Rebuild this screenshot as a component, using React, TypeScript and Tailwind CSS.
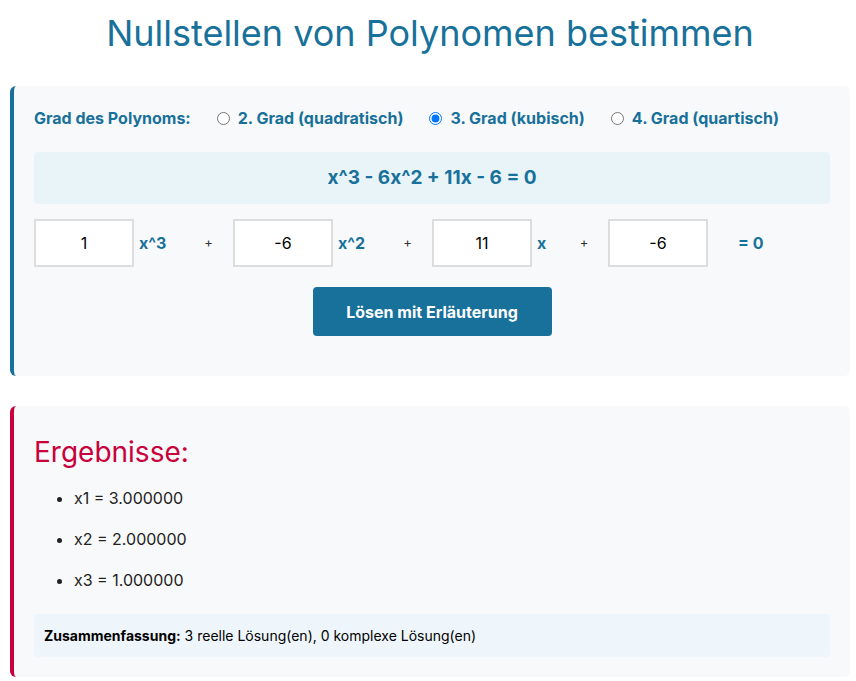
import React from 'react';

const Coef: React.FC<{ value: string }> = ({ value }) => (
  <input readOnly value={value} className="w-[100px] h-[48px] border-2 border-[#dddddd] bg-white text-center text-[16px] font-normal text-black outline-none" />
);

export default function App() {
  const blue = 'text-[#18719a]';
  return (
    <div className="min-h-[681px] bg-white pl-[10px] pr-[6px] pt-[10px]" style={{ fontFamily: 'Inter, sans-serif' }}>
      <h1 className={`text-center text-[36px] font-normal ${blue} leading-[46px] mb-[30px]`}>Nullstellen von Polynomen bestimmen</h1>

      <div className="bg-[#f8f9fa] border-l-4 border-[#18719a] rounded-md pl-[20px] pr-[20px] pt-[20px] pb-[40px]">
        <div className={`flex items-center gap-[26px] text-[16px] font-bold ${blue} h-[24px]`}>
          <span>Grad des Polynoms:</span>
          <label className="flex items-center gap-2"><input type="radio" name="g" readOnly />2. Grad (quadratisch)</label>
          <label className="flex items-center gap-2"><input type="radio" name="g" defaultChecked />3. Grad (kubisch)</label>
          <label className="flex items-center gap-2"><input type="radio" name="g" readOnly />4. Grad (quartisch)</label>
        </div>
        <div className={`mt-[22px] h-[52px] rounded bg-[#e8f4f8] flex items-center justify-center text-[19px] font-bold ${blue}`}>
          x^3 - 6x^2 + 11x - 6 = 0
        </div>
        <div className={`mt-[15px] flex items-center text-[16px] font-bold ${blue}`}>
          <Coef value="1" />
          <span className="w-[50px] pl-[5px]">x^3</span>
          <span className="w-[49px] text-center text-[13px] font-normal text-[#333]">+</span>
          <Coef value="-6" />
          <span className="w-[50px] pl-[5px]">x^2</span>
          <span className="w-[49px] text-center text-[13px] font-normal text-[#333]">+</span>
          <Coef value="11" />
          <span className="w-[28px] pl-[5px]">x</span>
          <span className="w-[48px] text-center text-[13px] font-normal text-[#333]">+</span>
          <Coef value="-6" />
          <span className="pl-[30px]">= 0</span>
        </div>
        <div className="mt-[20px] flex justify-center">
          <button className="w-[239px] h-[49px] rounded bg-[#18719a] text-white text-[16px] font-bold">Lösen mit Erläuterung</button>
        </div>
      </div>

      <div className="mt-[30px] bg-[#f8f9fa] border-l-4 border-[#c8003c] rounded-md px-[20px] pt-[28px] pb-[20px]">
        <h2 className="text-[28px] text-[#c8003c] leading-[36px]">Ergebnisse:</h2>
        <ul className="list-disc pl-[40px] mt-[16px] text-[16px] text-[#222] space-y-[17px]">
          <li>x1 = 3.000000</li>
          <li>x2 = 2.000000</li>
          <li>x3 = 1.000000</li>
        </ul>
        <div className="mt-[22px] bg-[#eef6fc] rounded px-[10px] py-[11px] text-[14px] text-black">
          <b>Zusammenfassung:</b> 3 reelle Lösung(en), 0 komplexe Lösung(en)
        </div>
      </div>
    </div>
  );
}
